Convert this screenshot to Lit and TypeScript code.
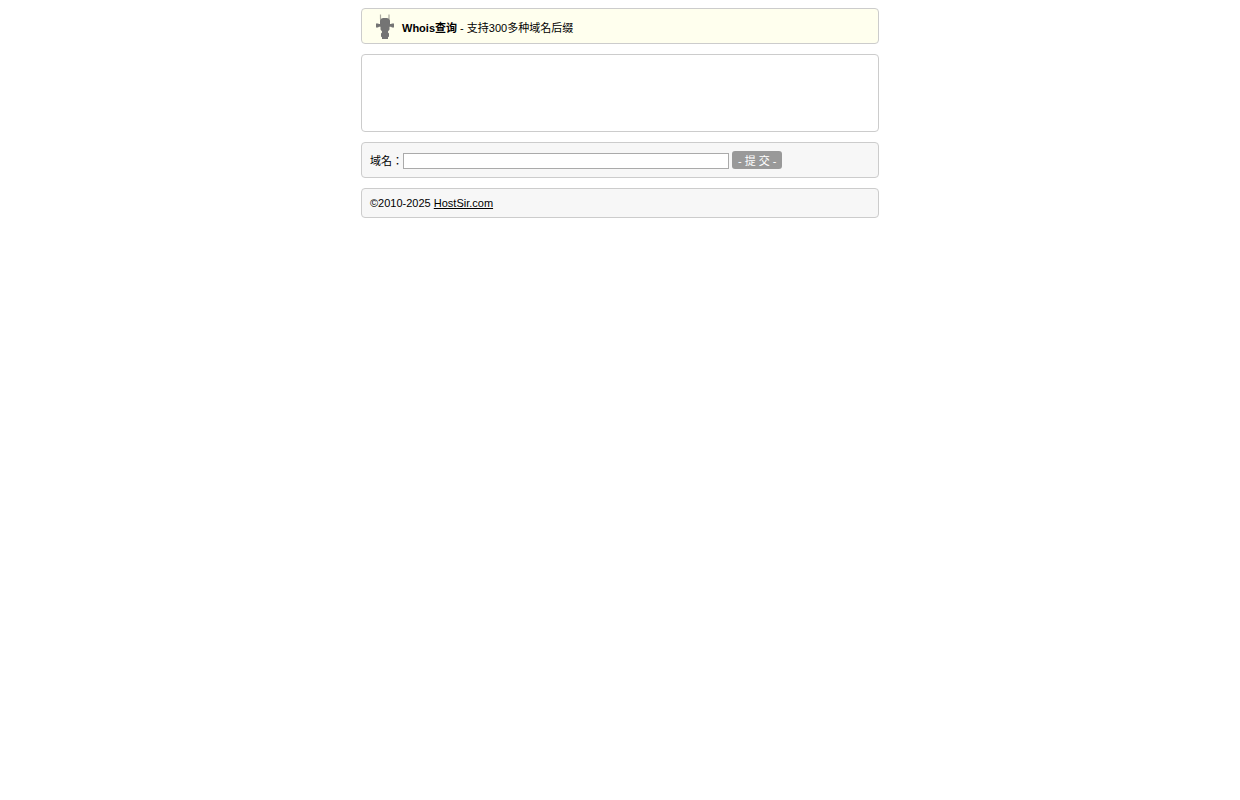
import { LitElement, html, css } from "lit";
import { customElement, state } from "lit/decorators.js";

@customElement("app-root")
export class AppRoot extends LitElement {
  static styles = css`
    :host {
      display: block;
      padding: 8px;
      color: #000;
      font: 11px/20px "Liberation Sans", "Noto Sans CJK JP", sans-serif;
    }
    .page {
      display: flex;
      flex-direction: column;
      gap: 10px;
      max-width: 518px;
      margin: 0 auto;
    }
    .panel {
      display: flex;
      align-items: center;
      box-sizing: border-box;
      padding: 4px 8px;
      border: 1px solid #ccc;
      border-radius: 4px;
      background: #f7f7f7;
    }
    .banner {
      gap: 2px;
      background: #ffffee;
      padding-top: 3px;
      padding-bottom: 1px;
    }
    .logo {
      display: block;
      width: 30px;
      height: 30px;
    }
    .title {
      margin: 0;
      padding-top: 2px;
      font-size: 11px;
      font-weight: normal;
    }
    .advert {
      min-height: 78px;
      background: #fff;
    }
    .query {
      padding-top: 8px;
      padding-bottom: 6px;
    }
    .domain {
      box-sizing: border-box;
      flex: 0 1 326px;
      min-width: 0;
      height: 16px;
      margin: 0;
      padding: 1px 2px;
      border: 1px solid #aaa;
      background: #fff;
      font: inherit;
      line-height: 12px;
    }
    .submit {
      flex: none;
      box-sizing: border-box;
      height: 18px;
      margin: 0 0 2px 3px;
      padding: 2px 5px 0 6px;
      border: 0;
      border-radius: 3px;
      background: #999;
      color: #fff;
      font: inherit;
      line-height: 16px;
      cursor: pointer;
    }
    .link {
      color: inherit;
      text-decoration: underline;
    }
  `;

  @state() private domain = "";

  private onInput(event: Event) {
    this.domain = (event.target as HTMLInputElement).value;
  }

  private onSubmit(event: Event) {
    event.preventDefault();
  }

  render() {
    return html`
      <div class="page">
        <header class="panel banner">
          <svg class="logo" viewBox="0 0 30 30" aria-hidden="true">
            <path d="M10.500 2.500v4.500l1.500 2M19 2.500v4.500l-1.500 2" fill="none" stroke="#aaa99f" stroke-width="1.200" />
            <path
              d="M10 11V8.500Q10.500 6 13 6h4q2.500 0 3 2.500v3.500h1l1-.5H24v4h-2l-1-.8h-1.500v2.800L18 19.500v1l1 1v3l-1 .8V27h-6v-1.700l-1-.8v-3l1-1v-1L10.500 17.500v-2.800H9l-1 .8H6v-4h2l1 .5h1z"
              fill="#747474"
            />
          </svg>
          <h1 class="title"><b>Whois查询</b> - 支持300多种域名后缀</h1>
        </header>
        <div class="panel advert"></div>
        <form class="panel query" @submit=${this.onSubmit}>
          <label for="domain">域名：</label>
          <input id="domain" class="domain" type="text" name="domain" .value=${this.domain} @input=${this.onInput} />
          <button class="submit" type="submit">- 提 交 -</button>
        </form>
        <footer class="panel">
          <span>©2010-2025 <a class="link" href="#">HostSir.com</a></span>
        </footer>
      </div>
    `;
  }
}
